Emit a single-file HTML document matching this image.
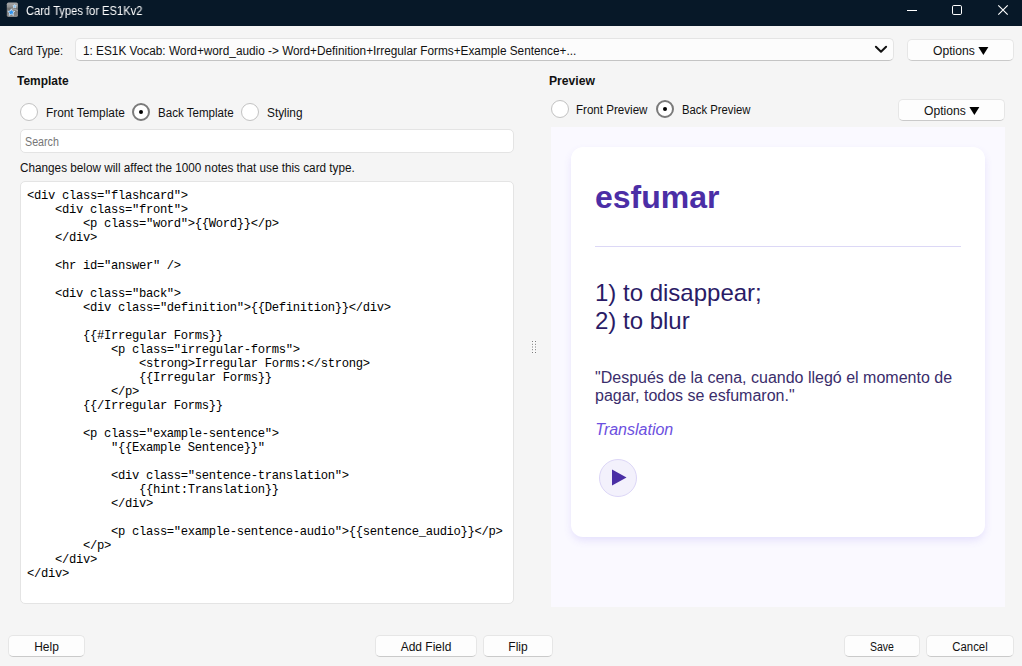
<!DOCTYPE html>
<html>
<head>
<meta charset="utf-8">
<title>Card Types for ES1Kv2</title>
<style>
*{box-sizing:border-box;margin:0;padding:0}
html,body{width:1022px;height:666px;overflow:hidden;background:#f5f5f5}
body{position:relative;font-family:"Liberation Sans",sans-serif;font-size:12px;color:#111;}
.abs{position:absolute}
#titlebar{left:0;top:0;width:1022px;height:26px;background:#071828}
#title{left:26px;top:4px;color:#fff;will-change:transform;font-size:12px;line-height:14px;white-space:nowrap;transform-origin:0 50%}
.ui{white-space:nowrap;line-height:14px;transform-origin:0 50%;color:#111}
.b{font-weight:bold}
.btn{background:#fdfdfd;border:1px solid #e6e6e6;border-bottom-color:#cacaca;border-radius:5px}
.btn span{position:absolute;left:0;right:0;top:4px;text-align:center;line-height:14px;white-space:nowrap}
.radio{width:18px;height:18px;border-radius:50%;border:1px solid #c2c2c2;background:#fff}
.radio.on{border:2px solid #7a7a7a}
.radio.on:after{content:"";position:absolute;left:4.7px;top:4.7px;width:4.6px;height:4.6px;border-radius:50%;background:#000}
.field{background:#fff;border:1px solid #e4e4e4;border-radius:5px}
#code{left:27px;top:189px;font-family:"Liberation Mono",monospace;font-size:12.2px;letter-spacing:-0.32px;line-height:14px;white-space:pre;color:#000}
#pv{left:551px;top:127px;width:454px;height:480px;background:#faf9ff}
#card{left:571px;top:147px;width:414px;height:390px;background:#fff;border-radius:12px;box-shadow:0 4px 8px -1px rgba(110,90,235,.16)}
</style>
</head>
<body>
<div id="titlebar" class="abs"></div>
<div id="title" class="abs" style="transform:scaleX(.93)">Card Types for ES1Kv2</div>

<svg class="abs" style="left:6px;top:2px" width="13" height="16" viewBox="0 0 13 16">
<defs><linearGradient id="ig" x1="0" y1="0" x2="0" y2="1"><stop offset="0" stop-color="#a8a8a8"/><stop offset="0.33" stop-color="#8e8e8e"/><stop offset="0.36" stop-color="#727272"/><stop offset="0.7" stop-color="#7e7e7e"/><stop offset="1" stop-color="#8a8a8a"/></linearGradient></defs>
<rect x="0.8" y="0.6" width="11.2" height="14.4" rx="1.7" fill="url(#ig)"/>
<path d="M5.8 6.2 Q9 6 12 8.2 L12 9.6 Q9 7.3 5.8 7.4 Z" fill="#b4b4b4" opacity=".75"/>
<path d="M5.3 6.8 L6.35 9 L8.8 9.3 L7 11 L7.45 13.4 L5.3 12.2 L3.15 13.4 L3.6 11 L1.8 9.3 L4.25 9 Z" fill="#2f93ee" stroke="#dcecfa" stroke-width="0.75" stroke-linejoin="round"/>
<path d="M8.6 2.5 L9.15 3.6 L10.4 3.8 L9.5 4.65 L9.7 5.9 L8.6 5.3 L7.5 5.9 L7.7 4.65 L6.8 3.8 L8.05 3.6 Z" fill="#6db9f6" stroke="#e4f1fc" stroke-width="0.6" stroke-linejoin="round"/>
</svg>
<svg class="abs" style="left:900px;top:0" width="122" height="26" viewBox="0 0 122 26">
<path d="M7 10.5 H17" stroke="#fff" stroke-width="1"/>
<rect x="52.5" y="5.5" width="9" height="9" rx="1.3" fill="none" stroke="#fff" stroke-width="1"/>
<path d="M98.3 5.3 L107.7 14.7 M107.7 5.3 L98.3 14.7" stroke="#fff" stroke-width="1.15"/>
</svg>
<svg class="abs" style="left:530px;top:339px" width="8" height="16" viewBox="0 0 8 16"><rect x="1.5" y="1.5" width="5" height="13" fill="#fff" opacity=".45"/><g fill="#7c7c7c"><rect x="2" y="2" width="1" height="1"/><rect x="5" y="2" width="1" height="1"/><rect x="2" y="4.8" width="1" height="1"/><rect x="5" y="4.8" width="1" height="1"/><rect x="2" y="7.5" width="1" height="1"/><rect x="5" y="7.5" width="1" height="1"/><rect x="2" y="10.2" width="1" height="1"/><rect x="5" y="10.2" width="1" height="1"/><rect x="2" y="13" width="1" height="1"/><rect x="5" y="13" width="1" height="1"/></g></svg>
<div class="abs ui" style="left:8.5px;top:44px;transform:scaleX(.923)">Card Type:</div>
<div class="abs field" style="left:75px;top:38px;width:819px;height:23px;border-bottom-color:#c4c4c4;background:#fcfcfc"></div>
<svg class="abs" style="left:873px;top:43px" width="16" height="12" viewBox="0 0 16 12"><path d="M2.9 3.8 L8 8.8 L13.1 3.8" fill="none" stroke="#111" stroke-width="2" stroke-linecap="round" stroke-linejoin="round"/></svg>
<div class="abs ui" style="left:82.5px;top:44px;transform:scaleX(.983)">1: ES1K Vocab: Word+word_audio -&gt; Word+Definition+Irregular Forms+Example Sentence+...</div>
<div class="abs btn" style="left:907px;top:39px;width:107px;height:22px"><span style="left:24.9px;right:auto;text-align:left;transform-origin:0 50%;transform:scaleX(1.01)">Options</span><svg class="abs" style="left:70.2px;top:6.3px" width="12" height="10" viewBox="0 0 12 10"><path d="M0.4 0.9 H10.4 L5.4 8.9 Z" fill="#000"/></svg></div>

<div class="abs ui b" style="left:16.5px;top:74px;transform:scaleX(.996)">Template</div>
<div class="abs radio" style="left:20px;top:103px"></div>
<div class="abs ui" style="left:46px;top:106px;transform:scaleX(.987)">Front Template</div>
<div class="abs radio on" style="left:132px;top:103px"></div>
<div class="abs ui" style="left:158.4px;top:106px;transform:scaleX(.963)">Back Template</div>
<div class="abs radio" style="left:241px;top:103px"></div>
<div class="abs ui" style="left:267px;top:106px;transform:scaleX(.986)">Styling</div>

<div class="abs field" style="left:20px;top:129px;width:494px;height:24px"></div>
<div class="abs ui" style="left:24.5px;top:135px;color:#767676;transform:scaleX(.892)">Search</div>
<div class="abs ui" style="left:19.9px;top:161px;transform:scaleX(.979)">Changes below will affect the 1000 notes that use this card type.</div>
<div class="abs field" style="left:20px;top:181px;width:494px;height:423px"></div>
<div id="code" class="abs">&lt;div class="flashcard"&gt;
    &lt;div class="front"&gt;
        &lt;p class="word"&gt;{{Word}}&lt;/p&gt;
    &lt;/div&gt;

    &lt;hr id="answer" /&gt;

    &lt;div class="back"&gt;
        &lt;div class="definition"&gt;{{Definition}}&lt;/div&gt;

        {{#Irregular Forms}}
            &lt;p class="irregular-forms"&gt;
                &lt;strong&gt;Irregular Forms:&lt;/strong&gt;
                {{Irregular Forms}}
            &lt;/p&gt;
        {{/Irregular Forms}}

        &lt;p class="example-sentence"&gt;
            "{{Example Sentence}}"

            &lt;div class="sentence-translation"&gt;
                {{hint:Translation}}
            &lt;/div&gt;

            &lt;p class="example-sentence-audio"&gt;{{sentence_audio}}&lt;/p&gt;
        &lt;/p&gt;
    &lt;/div&gt;
&lt;/div&gt;</div>

<div class="abs ui b" style="left:549.4px;top:74px;transform:scaleX(1.013)">Preview</div>
<div class="abs radio" style="left:551px;top:100px"></div>
<div class="abs ui" style="left:576.4px;top:103px;transform:scaleX(.965)">Front Preview</div>
<div class="abs radio on" style="left:656px;top:100px"></div>
<div class="abs ui" style="left:681.5px;top:103px;transform:scaleX(.941)">Back Preview</div>
<div class="abs btn" style="left:898px;top:99px;width:107px;height:22px"><span style="left:24.9px;right:auto;text-align:left;transform-origin:0 50%;transform:scaleX(1.01)">Options</span><svg class="abs" style="left:70.2px;top:6.3px" width="12" height="10" viewBox="0 0 12 10"><path d="M0.4 0.9 H10.4 L5.4 8.9 Z" fill="#000"/></svg></div>

<div id="pv" class="abs"></div>
<div id="card" class="abs"></div>
<div class="abs" id="word" style="left:595px;top:179px;font-size:32px;line-height:37px;font-weight:bold;color:#4b2ea6;white-space:nowrap">esfumar</div>
<div class="abs" style="left:595px;top:246px;width:366px;height:1px;background:#dcd8f6"></div>
<div class="abs" id="def" style="left:595px;top:279px;font-size:24px;line-height:28px;color:#2a1b66;white-space:nowrap">1) to disappear;<br>2) to blur</div>
<div class="abs" id="sent" style="left:595px;top:369px;width:366px;font-size:16px;line-height:18px;color:#3a2d6b">"Después de la cena, cuando llegó el momento de pagar, todos se esfumaron."</div>
<div class="abs" id="trans" style="left:595.3px;top:421px;font-size:16px;line-height:18px;font-style:italic;color:#6c4fe0;white-space:nowrap">Translation</div>
<svg class="abs" style="left:598px;top:458px" width="40" height="40" viewBox="0 0 40 40"><circle cx="20" cy="20" r="18.5" fill="#f3f1fc" stroke="#dcd6f7" stroke-width="1"/><path d="M14 11.5 L28.5 19.5 L14 27.5 Z" fill="#4a2fa5"/></svg>

<div class="abs btn" style="left:8px;top:635px;width:77px;height:22px"><span>Help</span></div>
<div class="abs btn" style="left:375px;top:635px;width:102px;height:22px"><span>Add Field</span></div>
<div class="abs btn" style="left:483px;top:635px;width:70px;height:22px"><span>Flip</span></div>
<div class="abs btn" style="left:844px;top:635px;width:76px;height:22px"><span style="transform:scaleX(.875)">Save</span></div>
<div class="abs btn" style="left:926px;top:635px;width:88px;height:22px"><span style="transform:scaleX(.946)">Cancel</span></div>
</body>
</html>
